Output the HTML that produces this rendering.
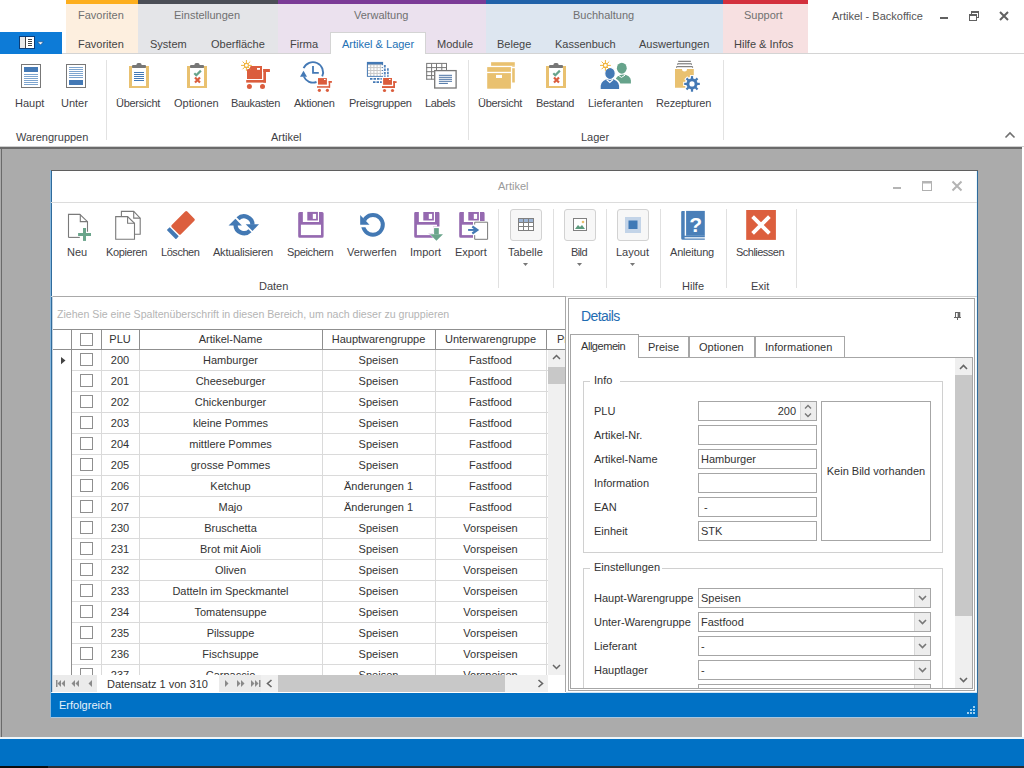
<!DOCTYPE html>
<html><head><meta charset="utf-8">
<style>
*{margin:0;padding:0;box-sizing:border-box}
html,body{width:1024px;height:768px;overflow:hidden;background:#fff;font-family:"Liberation Sans",sans-serif}
.a{position:absolute}
.t{position:absolute;font-size:11px;line-height:11px;white-space:nowrap;color:#3f3f46}
.c{text-align:center}
svg{position:absolute;overflow:visible}
</style></head><body>

<div class="a" style="left:0px;top:32px;width:62px;height:22px;background:#0d7bd7;"></div>
<div class="a" style="left:66px;top:0px;width:72px;height:53px;background:#fdefdf;"></div>
<div class="a" style="left:66px;top:0px;width:72px;height:4px;background:#fdae1d;"></div>
<div class="a" style="left:138px;top:0px;width:140px;height:53px;background:#e4e5e8;"></div>
<div class="a" style="left:138px;top:0px;width:140px;height:4px;background:#4b4e56;"></div>
<div class="a" style="left:278px;top:0px;width:208px;height:53px;background:#ebe1ee;"></div>
<div class="a" style="left:278px;top:0px;width:208px;height:4px;background:#7b3b96;"></div>
<div class="a" style="left:486px;top:0px;width:237px;height:53px;background:#dde6f0;"></div>
<div class="a" style="left:486px;top:0px;width:237px;height:4px;background:#2062a9;"></div>
<div class="a" style="left:723px;top:0px;width:85px;height:53px;background:#f7e0e1;"></div>
<div class="a" style="left:723px;top:0px;width:85px;height:4px;background:#d3303d;"></div>
<div class="a" style="left:62px;top:53px;width:962px;height:1px;background:#d4d4d4;"></div>
<div class="a" style="left:330px;top:32px;width:96px;height:22px;background:#fff;border:1px solid #d4d4d4;border-bottom:none;"></div>
<div class="t" style="left:78px;top:10px;color:#707070;">Favoriten</div>
<div class="t" style="left:174px;top:10px;color:#707070;">Einstellungen</div>
<div class="t" style="left:354px;top:10px;color:#707070;">Verwaltung</div>
<div class="t" style="left:573px;top:10px;color:#707070;">Buchhaltung</div>
<div class="t" style="left:744px;top:10px;color:#707070;">Support</div>
<div class="t" style="left:78px;top:39px;color:#444;">Favoriten</div>
<div class="t" style="left:150px;top:39px;color:#444;">System</div>
<div class="t" style="left:211px;top:39px;color:#444;">Oberfl&auml;che</div>
<div class="t" style="left:290px;top:39px;color:#444;">Firma</div>
<div class="t" style="left:342px;top:39px;color:#2371b4;">Artikel &amp; Lager</div>
<div class="t" style="left:437px;top:39px;color:#444;">Module</div>
<div class="t" style="left:497px;top:39px;color:#444;">Belege</div>
<div class="t" style="left:555px;top:39px;color:#444;">Kassenbuch</div>
<div class="t" style="left:639px;top:39px;color:#444;">Auswertungen</div>
<div class="t" style="left:734px;top:39px;color:#444;">Hilfe &amp; Infos</div>
<div class="t" style="left:832px;top:11px;color:#555;">Artikel - Backoffice</div>
<div class="a" style="left:0px;top:146px;width:1024px;height:1px;background:#cfcfcf;"></div>
<div class="a" style="left:106px;top:60px;width:1px;height:80px;background:#e2e2e2;"></div>
<div class="a" style="left:468px;top:60px;width:1px;height:80px;background:#e2e2e2;"></div>
<div class="a" style="left:723px;top:60px;width:1px;height:80px;background:#e2e2e2;"></div>
<div class="t" style="left:15px;top:98px;color:#3f3f46;">Haupt</div>
<div class="t" style="left:61px;top:98px;color:#3f3f46;">Unter</div>
<div class="t" style="left:116px;top:98px;color:#3f3f46;letter-spacing:-0.27px;">&Uuml;bersicht</div>
<div class="t" style="left:174px;top:98px;color:#3f3f46;">Optionen</div>
<div class="t" style="left:231px;top:98px;color:#3f3f46;letter-spacing:-0.34px;">Baukasten</div>
<div class="t" style="left:294px;top:98px;color:#3f3f46;letter-spacing:-0.29px;">Aktionen</div>
<div class="t" style="left:349px;top:98px;color:#3f3f46;letter-spacing:-0.23px;">Preisgruppen</div>
<div class="t" style="left:425px;top:98px;color:#3f3f46;letter-spacing:-0.4px;">Labels</div>
<div class="t" style="left:478px;top:98px;color:#3f3f46;letter-spacing:-0.27px;">&Uuml;bersicht</div>
<div class="t" style="left:536px;top:98px;color:#3f3f46;letter-spacing:-0.32px;">Bestand</div>
<div class="t" style="left:588px;top:98px;color:#3f3f46;">Lieferanten</div>
<div class="t" style="left:656px;top:98px;color:#3f3f46;letter-spacing:-0.18px;">Rezepturen</div>
<div class="t" style="left:16px;top:132px;color:#3f3f46;">Warengruppen</div>
<div class="t" style="left:271px;top:132px;color:#3f3f46;">Artikel</div>
<div class="t" style="left:581px;top:132px;color:#3f3f46;">Lager</div>
<svg style="left:0;top:0" width="1024" height="148"><rect x="19.5" y="36.5" width="15" height="12" fill="#fff" stroke="#0a3d7a" stroke-width="1"/><rect x="20" y="37" width="5" height="11" fill="#e8e8e8"/><rect x="25" y="37" width="1" height="11" fill="#444"/><rect x="28" y="39" width="4" height="1" fill="#444"/><rect x="28" y="41" width="4" height="1" fill="#444"/><rect x="28" y="43" width="4" height="1" fill="#444"/><rect x="28" y="45" width="4" height="1" fill="#444"/><path d="M37.5 41.8h6l-3 3.2z" fill="#fff" stroke="#0a3d7a" stroke-width="0.6"/><rect x="940" y="17" width="8" height="2" fill="#616161"/><g fill="none" stroke="#616161" stroke-width="1"><rect x="971.5" y="11.5" width="7" height="6"/><rect x="969.5" y="14.5" width="7" height="6" fill="#fff"/></g><rect x="971" y="11" width="8" height="2" fill="#616161"/><rect x="969" y="14" width="8" height="2" fill="#616161"/><path d="M1000 12l8 8M1008 12l-8 8" stroke="#616161" stroke-width="2"/><path d="M1005.5 137.5l4.5-4.5 4.5 4.5" fill="none" stroke="#707070" stroke-width="1.6"/><rect x="21.5" y="64.5" width="19" height="23" fill="#fff" stroke="#777"/><rect x="24" y="67" width="14" height="5" fill="#4479b5"/><rect x="24" y="74" width="14" height="1" fill="#7ea5cf"/><rect x="24" y="76" width="14" height="1" fill="#7ea5cf"/><rect x="24" y="78" width="14" height="1" fill="#7ea5cf"/><rect x="24" y="80" width="14" height="1" fill="#7ea5cf"/><rect x="24" y="82" width="14" height="1" fill="#7ea5cf"/><rect x="24" y="84" width="14" height="1" fill="#7ea5cf"/><rect x="66.5" y="64.5" width="19" height="23" fill="#fff" stroke="#777"/><rect x="69" y="80" width="14" height="5" fill="#4479b5"/><rect x="69" y="67" width="14" height="1" fill="#7ea5cf"/><rect x="69" y="69" width="14" height="1" fill="#7ea5cf"/><rect x="69" y="71" width="14" height="1" fill="#7ea5cf"/><rect x="69" y="73" width="14" height="1" fill="#7ea5cf"/><rect x="69" y="75" width="14" height="1" fill="#7ea5cf"/><rect x="69" y="77" width="14" height="1" fill="#7ea5cf"/><g transform="translate(129,63)"><rect x="0" y="3" width="20" height="22" fill="#e9c170"/><rect x="3" y="5" width="14" height="18" fill="#fff"/><rect x="3" y="2" width="14" height="3" rx="1" fill="#777"/><rect x="7.5" y="0" width="5" height="3" rx="1.5" fill="#777"/><rect x="5" y="9" width="10" height="1" fill="#4479b5"/><rect x="5" y="11" width="10" height="1" fill="#4479b5"/><rect x="5" y="13" width="10" height="1" fill="#4479b5"/><rect x="5" y="15" width="10" height="1" fill="#4479b5"/><rect x="5" y="17" width="10" height="1" fill="#4479b5"/></g><g transform="translate(187,63)"><rect x="0" y="3" width="20" height="22" fill="#e9c170"/><rect x="3" y="5" width="14" height="18" fill="#fff"/><rect x="3" y="2" width="14" height="3" rx="1" fill="#777"/><rect x="7.5" y="0" width="5" height="3" rx="1.5" fill="#777"/><path d="M7.3 10.2l2 2 4.6-4.6" fill="none" stroke="#66a38b" stroke-width="2.2"/><path d="M8 14.5l5 5M13 14.5l-5 5" stroke="#db5d3d" stroke-width="2.2"/></g><g transform="translate(546,63)"><rect x="0" y="3" width="20" height="22" fill="#e9c170"/><rect x="3" y="5" width="14" height="18" fill="#fff"/><rect x="3" y="2" width="14" height="3" rx="1" fill="#777"/><rect x="7.5" y="0" width="5" height="3" rx="1.5" fill="#777"/><path d="M7.3 10.2l2 2 4.6-4.6" fill="none" stroke="#66a38b" stroke-width="2.2"/><path d="M8 14.5l5 5M13 14.5l-5 5" stroke="#db5d3d" stroke-width="2.2"/></g><g transform="translate(236,55)" fill="#db5d3d"><rect x="11" y="11" width="15" height="13"/><rect x="21" y="13" width="3" height="1.8" fill="#fff"/><rect x="27.3" y="14" width="6.6" height="3"/><rect x="27.3" y="14" width="2.7" height="13.6"/><rect x="10.2" y="25" width="19.8" height="2.6"/><circle cx="13.4" cy="31.5" r="2.5"/><circle cx="26.5" cy="31.5" r="2.5"/><circle cx="10.4" cy="10.4" r="4.2" fill="#fff"/><line x1="12.20" y1="10.40" x2="15.80" y2="10.40" stroke="#f0b43c" stroke-width="1"/><line x1="11.67" y1="11.67" x2="14.22" y2="14.22" stroke="#f0b43c" stroke-width="1"/><line x1="10.40" y1="12.20" x2="10.40" y2="15.80" stroke="#f0b43c" stroke-width="1"/><line x1="9.13" y1="11.67" x2="6.58" y2="14.22" stroke="#f0b43c" stroke-width="1"/><line x1="8.60" y1="10.40" x2="5.00" y2="10.40" stroke="#f0b43c" stroke-width="1"/><line x1="9.13" y1="9.13" x2="6.58" y2="6.58" stroke="#f0b43c" stroke-width="1"/><line x1="10.40" y1="8.60" x2="10.40" y2="5.00" stroke="#f0b43c" stroke-width="1"/><line x1="11.67" y1="9.13" x2="14.22" y2="6.58" stroke="#f0b43c" stroke-width="1"/><circle cx="10.4" cy="10.4" r="2" fill="#fff" stroke="#f0b43c" stroke-width="1.1"/></g><g transform="translate(298,57)"><path d="M5.6 11.2 A10 10 0 1 1 24.2 19.4" fill="none" stroke="#4479b5" stroke-width="1.9"/><path d="M18.5 25 A10 10 0 0 1 5.8 19.5" fill="none" stroke="#4479b5" stroke-width="1.9"/><path d="M5.5 13.8L2 19.8h7z" fill="#4479b5"/><path d="M15 9.1v6.8h5.8" fill="none" stroke="#4479b5" stroke-width="1.8"/><g fill="#db5d3d"><rect x="20" y="21.1" width="8.9" height="6.5"/><rect x="26" y="22" width="1.6" height="1" fill="#fff"/><rect x="30.7" y="24" width="3.2" height="1.8"/><rect x="30.7" y="24" width="1.5" height="6.7"/><rect x="19" y="29.2" width="13" height="1.5"/><circle cx="21.4" cy="33.3" r="1.6"/><circle cx="29.4" cy="33.3" r="1.6"/></g></g><g transform="translate(362,58)"><rect x="5.4" y="4.4" width="15.2" height="13.9" fill="#c8c8c8" stroke="#4479b5" stroke-width="1"/><rect x="5" y="4" width="16" height="2.4" fill="#4479b5"/><rect x="6.0" y="7.2" width="2.2" height="1.9" fill="#fff"/><rect x="6.0" y="10.1" width="2.2" height="1.9" fill="#fff"/><rect x="6.0" y="13.0" width="2.2" height="1.9" fill="#fff"/><rect x="6.0" y="15.9" width="2.2" height="1.9" fill="#fff"/><rect x="9.2" y="7.2" width="2.2" height="1.9" fill="#fff"/><rect x="9.2" y="10.1" width="2.2" height="1.9" fill="#fff"/><rect x="9.2" y="13.0" width="2.2" height="1.9" fill="#fff"/><rect x="9.2" y="15.9" width="2.2" height="1.9" fill="#fff"/><rect x="12.4" y="7.2" width="2.2" height="1.9" fill="#fff"/><rect x="12.4" y="10.1" width="2.2" height="1.9" fill="#fff"/><rect x="12.4" y="13.0" width="2.2" height="1.9" fill="#fff"/><rect x="12.4" y="15.9" width="2.2" height="1.9" fill="#fff"/><rect x="15.6" y="7.2" width="2.2" height="1.9" fill="#fff"/><rect x="15.6" y="10.1" width="2.2" height="1.9" fill="#fff"/><rect x="15.6" y="13.0" width="2.2" height="1.9" fill="#fff"/><rect x="15.6" y="15.9" width="2.2" height="1.9" fill="#fff"/><rect x="18.8" y="7.2" width="2.2" height="1.9" fill="#fff"/><rect x="18.8" y="10.1" width="2.2" height="1.9" fill="#fff"/><rect x="18.8" y="13.0" width="2.2" height="1.9" fill="#fff"/><rect x="18.8" y="15.9" width="2.2" height="1.9" fill="#fff"/><path d="M22.9 7v11.8M25.9 10.2v8.6" stroke="#4479b5" stroke-width="1.6" stroke-dasharray="2.5 1"/><path d="M8 20.9h11.8M11 24.1h8.8" stroke="#4479b5" stroke-width="1.6" stroke-dasharray="2.5 1"/><g fill="#db5d3d"><rect x="21.1" y="20" width="8.9" height="6.8"/><rect x="27" y="21" width="1.6" height="1" fill="#fff"/><rect x="31.2" y="23.2" width="3.4" height="1.8"/><rect x="31.2" y="23.2" width="1.8" height="6.5"/><rect x="20" y="28.1" width="13" height="1.9"/><circle cx="22.5" cy="32.5" r="1.6"/><circle cx="30.5" cy="32.5" r="1.6"/></g></g><g transform="translate(422,58)"><clipPath id="lbclip"><path d="M0 0h40v12.1h-28v28h-12z"/></clipPath><g clip-path="url(#lbclip)"><path d="M4.7 5.5v16" stroke="#777" stroke-width="1"/><path d="M9.6 5.5v16" stroke="#777" stroke-width="1"/><path d="M14.5 5.5v16" stroke="#777" stroke-width="1"/><path d="M19.8 5.5v16" stroke="#777" stroke-width="1"/><path d="M24.5 5.5v16" stroke="#777" stroke-width="1"/><path d="M4.2 5.4h20.8" stroke="#777" stroke-width="1"/><path d="M4.2 9.6h20.8" stroke="#777" stroke-width="1"/><path d="M4.2 13.7h20.8" stroke="#777" stroke-width="1"/><path d="M4.2 17.6h20.8" stroke="#777" stroke-width="1"/><path d="M4.2 21.2h20.8" stroke="#777" stroke-width="1"/></g><rect x="12.7" y="12.6" width="21.4" height="17.4" fill="#fff" stroke="#777" stroke-width="1.3"/><rect x="16.9" y="16.8" width="13.1" height="1" fill="#4a72a4"/><rect x="16.9" y="18.8" width="13.1" height="1" fill="#4a72a4"/><rect x="16.9" y="20.8" width="13.1" height="1" fill="#4a72a4"/><rect x="16.9" y="22.8" width="13.1" height="1" fill="#4a72a4"/><rect x="16.9" y="24.9" width="9" height="1" fill="#4a72a4"/></g><g transform="translate(483,58)" fill="#e9c170"><rect x="8.1" y="4.2" width="23.7" height="3.6"/><rect x="29.2" y="7.8" width="2.6" height="0.9"/><rect x="29.2" y="10.2" width="2.6" height="14.3"/><rect x="4.2" y="9.1" width="23.7" height="4.7"/><rect x="4.2" y="15.1" width="23.7" height="15.6"/><rect x="13" y="16.9" width="6" height="3.1" fill="#fff"/></g><g transform="translate(596,56)"><path d="M19.5 27.6 v-3 a7.7 6 0 0 1 15.4 0 v3z" fill="#66a38b"/><path d="M22 19.2 l3.5 2.2 3.5-2.2" fill="none" stroke="#fff" stroke-width="1"/><ellipse cx="25.8" cy="12.2" rx="4.9" ry="5.5" fill="#66a38b"/><path d="M3.9 33.8 v-4 a9 7 0 0 1 20 0 v4z" fill="#4479b5" stroke="#fff" stroke-width="1.6"/><ellipse cx="14" cy="17.4" rx="5.3" ry="6.1" fill="#4479b5" stroke="#fff" stroke-width="1.2"/><path d="M10.5 23.5l3.3 3 3.3-3" fill="none" stroke="#fff" stroke-width="1.2"/><circle cx="9.4" cy="9.4" r="4.2" fill="#fff"/><line x1="11.20" y1="9.40" x2="14.80" y2="9.40" stroke="#f0b43c" stroke-width="1"/><line x1="10.67" y1="10.67" x2="13.22" y2="13.22" stroke="#f0b43c" stroke-width="1"/><line x1="9.40" y1="11.20" x2="9.40" y2="14.80" stroke="#f0b43c" stroke-width="1"/><line x1="8.13" y1="10.67" x2="5.58" y2="13.22" stroke="#f0b43c" stroke-width="1"/><line x1="7.60" y1="9.40" x2="4.00" y2="9.40" stroke="#f0b43c" stroke-width="1"/><line x1="8.13" y1="8.13" x2="5.58" y2="5.58" stroke="#f0b43c" stroke-width="1"/><line x1="9.40" y1="7.60" x2="9.40" y2="4.00" stroke="#f0b43c" stroke-width="1"/><line x1="10.67" y1="8.13" x2="13.22" y2="5.58" stroke="#f0b43c" stroke-width="1"/><circle cx="9.4" cy="9.4" r="2" fill="#fff" stroke="#f0b43c" stroke-width="1.1"/></g><g transform="translate(668,56)"><path d="M10.2 5.3h12.7" stroke="#666" stroke-width="1"/><path d="M9.6 8.6v-0.8h13.9v0.8" fill="none" stroke="#666" stroke-width="1"/><path d="M8.6 11.7v-1h16v1" fill="none" stroke="#666" stroke-width="1"/><path d="M7 13h7a2.5 2.5 0 0 0 5 0h6.8v18.8h-18.8z" fill="#e9c170"/><g transform="translate(24,27.9)"><circle r="7.2" fill="#fff"/><rect x="-2.1" y="-8.8" width="4.2" height="5" fill="#fff" transform="rotate(0)"/><rect x="-2.1" y="-8.8" width="4.2" height="5" fill="#fff" transform="rotate(45)"/><rect x="-2.1" y="-8.8" width="4.2" height="5" fill="#fff" transform="rotate(90)"/><rect x="-2.1" y="-8.8" width="4.2" height="5" fill="#fff" transform="rotate(135)"/><rect x="-2.1" y="-8.8" width="4.2" height="5" fill="#fff" transform="rotate(180)"/><rect x="-2.1" y="-8.8" width="4.2" height="5" fill="#fff" transform="rotate(225)"/><rect x="-2.1" y="-8.8" width="4.2" height="5" fill="#fff" transform="rotate(270)"/><rect x="-2.1" y="-8.8" width="4.2" height="5" fill="#fff" transform="rotate(315)"/><circle r="5.6" fill="#4479b5"/><rect x="-1.1" y="-7.8" width="2.2" height="4" fill="#4479b5" transform="rotate(0)"/><rect x="-1.1" y="-7.8" width="2.2" height="4" fill="#4479b5" transform="rotate(45)"/><rect x="-1.1" y="-7.8" width="2.2" height="4" fill="#4479b5" transform="rotate(90)"/><rect x="-1.1" y="-7.8" width="2.2" height="4" fill="#4479b5" transform="rotate(135)"/><rect x="-1.1" y="-7.8" width="2.2" height="4" fill="#4479b5" transform="rotate(180)"/><rect x="-1.1" y="-7.8" width="2.2" height="4" fill="#4479b5" transform="rotate(225)"/><rect x="-1.1" y="-7.8" width="2.2" height="4" fill="#4479b5" transform="rotate(270)"/><rect x="-1.1" y="-7.8" width="2.2" height="4" fill="#4479b5" transform="rotate(315)"/><circle r="2.6" fill="#fff"/></g></g></svg>
<div class="a" style="left:0px;top:147px;width:1024px;height:2px;background:#6a6a6a;"></div>
<div class="a" style="left:0px;top:149px;width:1024px;height:588px;background:#ababab;"></div>
<div class="a" style="left:1px;top:149px;width:1px;height:588px;background:#6a6a6a;"></div>
<div class="a" style="left:1022px;top:147px;width:2px;height:591px;background:#fff;"></div>
<div class="a" style="left:0px;top:737px;width:1024px;height:2px;background:#eef6fb;"></div>
<div class="a" style="left:0px;top:739px;width:1024px;height:27px;background:#0071c5;"></div>
<div class="a" style="left:0px;top:766px;width:1024px;height:2px;background:#2a2d33;"></div>
<div class="a" style="left:0px;top:766px;width:48px;height:2px;background:#0c0c0c;"></div>
<div class="a" style="left:50px;top:170px;width:928px;height:547px;background:#fff;"></div>
<div class="a" style="left:50px;top:170px;width:1px;height:548px;background:#88b6da;"></div>
<div class="a" style="left:51px;top:170px;width:1px;height:547px;background:#2f6b9c;"></div>
<div class="a" style="left:976px;top:171px;width:1px;height:546px;background:#eaf8ff;"></div>
<div class="a" style="left:977px;top:170px;width:1px;height:548px;background:#2f6b9c;"></div>
<div class="a" style="left:51px;top:170px;width:927px;height:1px;background:#5f5f5f;"></div>
<div class="t" style="left:498px;top:181px;color:#9a9a9a;">Artikel</div>
<svg style="left:0;top:0" width="1024" height="210"><rect x="893" y="187" width="8" height="2" fill="#b4b4b4"/><g fill="none" stroke="#b0b0b0" stroke-width="1"><rect x="922.5" y="181.5" width="9" height="9"/></g><rect x="922" y="181" width="10" height="2.5" fill="#b4b4b4"/><path d="M952.5 181.5l9 9M961.5 181.5l-9 9" stroke="#b4b4b4" stroke-width="2"/></svg>
<div class="a" style="left:51px;top:202px;width:926px;height:1px;background:#dcdcdc;"></div>
<div class="a" style="left:51px;top:296px;width:926px;height:1px;background:#d0d0d0;"></div>
<div class="a" style="left:498px;top:209px;width:1px;height:79px;background:#e0e0e0;"></div>
<div class="a" style="left:553px;top:209px;width:1px;height:79px;background:#e0e0e0;"></div>
<div class="a" style="left:606px;top:209px;width:1px;height:79px;background:#e0e0e0;"></div>
<div class="a" style="left:660px;top:209px;width:1px;height:79px;background:#e0e0e0;"></div>
<div class="a" style="left:726px;top:209px;width:1px;height:79px;background:#e0e0e0;"></div>
<div class="a" style="left:796px;top:209px;width:1px;height:79px;background:#e0e0e0;"></div>
<div class="t" style="left:67px;top:247px;color:#3f3f46;">Neu</div>
<div class="t" style="left:106px;top:247px;color:#3f3f46;letter-spacing:-0.37px;">Kopieren</div>
<div class="t" style="left:161px;top:247px;color:#3f3f46;letter-spacing:-0.45px;">L&ouml;schen</div>
<div class="t" style="left:213px;top:247px;color:#3f3f46;letter-spacing:-0.23px;">Aktualisieren</div>
<div class="t" style="left:287px;top:247px;color:#3f3f46;letter-spacing:-0.35px;">Speichern</div>
<div class="t" style="left:347px;top:247px;color:#3f3f46;">Verwerfen</div>
<div class="t" style="left:410px;top:247px;color:#3f3f46;">Import</div>
<div class="t" style="left:455px;top:247px;color:#3f3f46;">Export</div>
<div class="t" style="left:508px;top:247px;color:#3f3f46;">Tabelle</div>
<div class="t" style="left:571px;top:247px;color:#3f3f46;letter-spacing:-0.6px;">Bild</div>
<div class="t" style="left:616px;top:247px;color:#3f3f46;">Layout</div>
<div class="t" style="left:670px;top:247px;color:#3f3f46;letter-spacing:-0.21px;">Anleitung</div>
<div class="t" style="left:736px;top:247px;color:#3f3f46;letter-spacing:-0.52px;">Schliessen</div>
<div class="t" style="left:259px;top:281px;color:#3f3f46;">Daten</div>
<div class="t" style="left:682px;top:281px;color:#3f3f46;">Hilfe</div>
<div class="t" style="left:751px;top:281px;color:#3f3f46;">Exit</div>
<svg style="left:523.0px;top:263px" width="5" height="3"><path d="M0 0h5l-2.5 3z" fill="#777"/></svg>
<svg style="left:577.0px;top:263px" width="5" height="3"><path d="M0 0h5l-2.5 3z" fill="#777"/></svg>
<svg style="left:630.0px;top:263px" width="5" height="3"><path d="M0 0h5l-2.5 3z" fill="#777"/></svg>
<div class="a" style="left:510px;top:209px;width:32px;height:32px;background:#f7f7f7;border:1px solid #d2d2d2;border-radius:3px;"></div>
<div class="a" style="left:564px;top:209px;width:32px;height:32px;background:#f7f7f7;border:1px solid #d2d2d2;border-radius:3px;"></div>
<div class="a" style="left:617px;top:209px;width:32px;height:32px;background:#f7f7f7;border:1px solid #d2d2d2;border-radius:3px;"></div>
<svg style="left:518px;top:218px" width="16" height="13"><rect x="0.5" y="0.5" width="15" height="12" fill="#fff" stroke="#808080"/><rect x="1" y="1" width="14" height="3.5" fill="#9cb4d4"/><path d="M0.5 4.5h15M0.5 8.5h15M5.5 0.5v12M10.5 0.5v12" stroke="#808080" stroke-width="1"/></svg>
<svg style="left:573px;top:218px" width="14" height="13"><rect x="0.5" y="0.5" width="13" height="12" fill="#fff" stroke="#808080"/><path d="M2 11l3-4 2 2 2-2 3 4z" fill="#5b9a7d"/><circle cx="10" cy="4" r="1.3" fill="#e8c06e"/></svg>
<svg style="left:625px;top:217px" width="16" height="16"><rect x="0" y="0" width="16" height="16" fill="#c3d4e8"/><rect x="3.5" y="3.5" width="9" height="8.5" fill="#3f79b6"/></svg>
<svg style="left:0;top:0" width="1024" height="300"><path d="M68.5 237.4V214.4h11.3l7.7 7.3v10" fill="#fff" stroke="#7a7a7a" stroke-width="1.1"/><path d="M68.5 237.4h11.3" stroke="#7a7a7a" stroke-width="1.1"/><path d="M80.3 214.4v7.2h7.2" fill="none" stroke="#7a7a7a" stroke-width="1.1"/><rect x="78.1" y="233" width="12.9" height="3" fill="#6aa58b"/><rect x="83" y="228" width="3" height="12.9" fill="#6aa58b"/><path d="M121.4 216.6V211.4h12.3l6.5 6.7v16.1h-5.7" fill="#fff" stroke="#7a7a7a" stroke-width="1.1"/><path d="M133.7 211.4v6.7h6.5" fill="none" stroke="#7a7a7a" stroke-width="1.1"/><path d="M115.7 239.2V216.6h11.9l6.9 6.7v15.9z" fill="#fff" stroke="#7a7a7a" stroke-width="1.1"/><path d="M127.6 216.6v6.7h6.9" fill="none" stroke="#7a7a7a" stroke-width="1.1"/><g transform="translate(183.05,222.9) rotate(-45)"><rect x="-11" y="-6.5" width="22" height="13" rx="1.5" fill="#dc5f3e"/><rect x="-16.6" y="-6.5" width="4.2" height="13" rx="0.8" fill="#4379b4"/></g><g transform="translate(226,205)"><path d="M12.03 13.73A8.45 8.45 0 0 1 26.45 19.7" fill="none" stroke="#4379b4" stroke-width="4.3"/><path d="M9.55 19.7A8.45 8.45 0 0 0 23.97 25.67" fill="none" stroke="#4379b4" stroke-width="4.3"/><path d="M19.7 19.2H33l-6.5 6.8z" fill="#4379b4"/><path d="M2.6 20.6h13.3L9.4 13.8z" fill="#4379b4"/></g><g transform="translate(294,211.9)"><g><path d="M5.7 0h22.4a1.5 1.5 0 0 1 1.5 1.5v22.9a1.5 1.5 0 0 1 -1.5 1.5h-22.4a1.5 1.5 0 0 1 -1.5 -1.5v-22.9a1.5 1.5 0 0 1 1.5-1.5z" fill="#9569b0"/><rect x="8.85" y="0" width="16.15" height="10.1" fill="#fff"/><rect x="13.3" y="0" width="10.6" height="8.6" fill="#9569b0"/><rect x="18.8" y="2" width="3.3" height="5" fill="#fff"/><rect x="6.9" y="12.8" width="20.1" height="10.4" fill="#fff"/></g></g><clipPath id="impclip"><path d="M0 0H29.8V14.6H23.1V21.3H18.5L23.2 26V31H0Z"/></clipPath><g transform="translate(410,211.9)"><g clip-path="url(#impclip)"><path d="M5.7 0h22.4a1.5 1.5 0 0 1 1.5 1.5v22.9a1.5 1.5 0 0 1 -1.5 1.5h-22.4a1.5 1.5 0 0 1 -1.5 -1.5v-22.9a1.5 1.5 0 0 1 1.5-1.5z" fill="#9569b0"/><rect x="8.85" y="0" width="16.15" height="10.1" fill="#fff"/><rect x="13.3" y="0" width="10.6" height="8.6" fill="#9569b0"/><rect x="18.8" y="2" width="3.3" height="5" fill="#fff"/><rect x="6.9" y="12.8" width="20.1" height="10.4" fill="#fff"/></g><rect x="24.1" y="16.2" width="4.7" height="6.3" fill="#6aa58b"/><path d="M19.9 22.3h13.1l-6.55 6.55z" fill="#6aa58b"/></g><clipPath id="expclip"><path d="M0 0h40v9.0h-22v22h-18z"/></clipPath><g transform="translate(455,211.9)"><g clip-path="url(#expclip)"><path d="M5.7 0h22.4a1.5 1.5 0 0 1 1.5 1.5v22.9a1.5 1.5 0 0 1 -1.5 1.5h-22.4a1.5 1.5 0 0 1 -1.5 -1.5v-22.9a1.5 1.5 0 0 1 1.5-1.5z" fill="#9569b0"/><rect x="8.85" y="0" width="16.15" height="10.1" fill="#fff"/><rect x="13.3" y="0" width="10.6" height="8.6" fill="#9569b0"/><rect x="18.8" y="2" width="3.3" height="5" fill="#fff"/><rect x="6.9" y="12.8" width="20.1" height="10.4" fill="#fff"/></g><path d="M19.7 12.7V10.3h12.9v17.1H19.7v-4.2" fill="none" stroke="#7a7a7a" stroke-width="1"/><rect x="13.1" y="17.1" width="8.6" height="1.9" fill="#4379b4"/><path d="M17.3 14.6l5 3.5-5 3.5" fill="none" stroke="#4379b4" stroke-width="2.2"/></g><clipPath id="vwclip"><path d="M-5 -5H40V40H-5V21.3H16.4L-2.5 1.28H-5Z"/></clipPath><g transform="translate(355,206)"><circle cx="17.95" cy="18.85" r="9.85" fill="none" stroke="#4379b4" stroke-width="4" clip-path="url(#vwclip)"/><path d="M5.2 8.9V18.75H14.5z" fill="#4379b4"/></g><g transform="translate(676,206)" fill="#4a7fb8"><path d="M6.2 4.9h2.5v24.9h20.1v1.4H8.7a1.2 1.2 0 0 0 0 1.2h20.1v1.4H6.7a1.5 1.5 0 0 1-1.5-1.5V5.9a1 1 0 0 1 1-1z"/><rect x="10.1" y="4.9" width="18.7" height="24.9"/><text x="19.6" y="25.8" font-family="Liberation Sans" font-weight="bold" font-size="21" fill="#fff" text-anchor="middle">?</text></g><rect x="746.2" y="210" width="29.7" height="29.9" fill="#dc5f3e"/><path d="M752.6 216.6L769.4 233.4M769.4 216.6L752.6 233.4" stroke="#fff" stroke-width="3.8"/></svg>
<div class="a" style="left:51px;top:692px;width:926px;height:1px;background:#cfe4f5;"></div>
<div class="a" style="left:51px;top:693px;width:926px;height:24px;background:#0071c5;"></div>
<div class="a" style="left:51px;top:717px;width:927px;height:1px;background:#a9c6de;"></div>
<div class="t" style="left:59px;top:700px;color:#e6f2fb;">Erfolgreich</div>
<svg style="left:966px;top:705px" width="10" height="10"><rect x="7" y="1" width="2" height="2" fill="#9fd0f0"/><rect x="4" y="4" width="2" height="2" fill="#9fd0f0"/><rect x="7" y="4" width="2" height="2" fill="#9fd0f0"/><rect x="1" y="7" width="2" height="2" fill="#9fd0f0"/><rect x="4" y="7" width="2" height="2" fill="#9fd0f0"/><rect x="7" y="7" width="2" height="2" fill="#9fd0f0"/></svg>
<div class="a" style="left:52px;top:296px;width:514px;height:397px;background:#fff;"></div>
<div class="a" style="left:52px;top:296px;width:514px;height:1px;background:#a9a9a9;"></div>
<div class="a" style="left:565px;top:296px;width:1px;height:396px;background:#a9a9a9;"></div>
<div class="a" style="left:52px;top:296px;width:1px;height:396px;background:#c5d3e0;"></div>
<div class="t" style="left:57px;top:309px;color:#b4b4b4;font-size:10.6px;">Ziehen Sie eine Spalten&uuml;berschrift in diesen Bereich, um nach dieser zu gruppieren</div>
<div class="a" style="left:53px;top:329px;width:512px;height:1px;background:#8f8f8f;"></div>
<div class="a" style="left:53px;top:349px;width:512px;height:1px;background:#8f8f8f;"></div>
<div class="a" style="left:71px;top:329px;width:1px;height:20px;background:#8f8f8f;"></div>
<div class="a" style="left:101px;top:329px;width:1px;height:20px;background:#8f8f8f;"></div>
<div class="a" style="left:139px;top:329px;width:1px;height:20px;background:#8f8f8f;"></div>
<div class="a" style="left:322px;top:329px;width:1px;height:20px;background:#8f8f8f;"></div>
<div class="a" style="left:435px;top:329px;width:1px;height:20px;background:#8f8f8f;"></div>
<div class="a" style="left:546px;top:329px;width:1px;height:20px;background:#8f8f8f;"></div>
<div class="a" style="left:71px;top:349px;width:1px;height:326px;background:#8f8f8f;"></div>
<div class="t" style="left:-30.0px;top:334px;width:300px;text-align:center;color:#333;">PLU</div>
<div class="t" style="left:80.5px;top:334px;width:300px;text-align:center;color:#333;">Artikel-Name</div>
<div class="t" style="left:228.5px;top:334px;width:300px;text-align:center;color:#333;">Hauptwarengruppe</div>
<div class="t" style="left:340.5px;top:334px;width:300px;text-align:center;color:#333;">Unterwarengruppe</div>
<div class="a" style="left:547px;top:330px;width:18px;height:19px;overflow:hidden"><div class="t" style="left:10px;top:4px;color:#333">Pr</div></div>
<div class="a" style="left:80px;top:333px;width:13px;height:13px;border:1px solid #8f8f8f;"></div>
<div class="a" style="left:53px;top:350px;width:495px;height:325px;overflow:hidden">
<div class="a" style="left:19px;top:20px;width:476px;height:1px;background:#dadada"></div>
<div class="a" style="left:27px;top:3px;width:13px;height:13px;border:1px solid #8f8f8f"></div>
<div class="t" style="left:-83.0px;top:5px;width:300px;text-align:center;color:#333">200</div>
<div class="t" style="left:27.5px;top:5px;width:300px;text-align:center;color:#333">Hamburger</div>
<div class="t" style="left:175.5px;top:5px;width:300px;text-align:center;color:#333">Speisen</div>
<div class="t" style="left:287.5px;top:5px;width:300px;text-align:center;color:#333">Fastfood</div>
<div class="a" style="left:19px;top:41px;width:476px;height:1px;background:#dadada"></div>
<div class="a" style="left:27px;top:24px;width:13px;height:13px;border:1px solid #8f8f8f"></div>
<div class="t" style="left:-83.0px;top:26px;width:300px;text-align:center;color:#333">201</div>
<div class="t" style="left:27.5px;top:26px;width:300px;text-align:center;color:#333">Cheeseburger</div>
<div class="t" style="left:175.5px;top:26px;width:300px;text-align:center;color:#333">Speisen</div>
<div class="t" style="left:287.5px;top:26px;width:300px;text-align:center;color:#333">Fastfood</div>
<div class="a" style="left:19px;top:62px;width:476px;height:1px;background:#dadada"></div>
<div class="a" style="left:27px;top:45px;width:13px;height:13px;border:1px solid #8f8f8f"></div>
<div class="t" style="left:-83.0px;top:47px;width:300px;text-align:center;color:#333">202</div>
<div class="t" style="left:27.5px;top:47px;width:300px;text-align:center;color:#333">Chickenburger</div>
<div class="t" style="left:175.5px;top:47px;width:300px;text-align:center;color:#333">Speisen</div>
<div class="t" style="left:287.5px;top:47px;width:300px;text-align:center;color:#333">Fastfood</div>
<div class="a" style="left:19px;top:83px;width:476px;height:1px;background:#dadada"></div>
<div class="a" style="left:27px;top:66px;width:13px;height:13px;border:1px solid #8f8f8f"></div>
<div class="t" style="left:-83.0px;top:68px;width:300px;text-align:center;color:#333">203</div>
<div class="t" style="left:27.5px;top:68px;width:300px;text-align:center;color:#333">kleine Pommes</div>
<div class="t" style="left:175.5px;top:68px;width:300px;text-align:center;color:#333">Speisen</div>
<div class="t" style="left:287.5px;top:68px;width:300px;text-align:center;color:#333">Fastfood</div>
<div class="a" style="left:19px;top:104px;width:476px;height:1px;background:#dadada"></div>
<div class="a" style="left:27px;top:87px;width:13px;height:13px;border:1px solid #8f8f8f"></div>
<div class="t" style="left:-83.0px;top:89px;width:300px;text-align:center;color:#333">204</div>
<div class="t" style="left:27.5px;top:89px;width:300px;text-align:center;color:#333">mittlere Pommes</div>
<div class="t" style="left:175.5px;top:89px;width:300px;text-align:center;color:#333">Speisen</div>
<div class="t" style="left:287.5px;top:89px;width:300px;text-align:center;color:#333">Fastfood</div>
<div class="a" style="left:19px;top:125px;width:476px;height:1px;background:#dadada"></div>
<div class="a" style="left:27px;top:108px;width:13px;height:13px;border:1px solid #8f8f8f"></div>
<div class="t" style="left:-83.0px;top:110px;width:300px;text-align:center;color:#333">205</div>
<div class="t" style="left:27.5px;top:110px;width:300px;text-align:center;color:#333">grosse Pommes</div>
<div class="t" style="left:175.5px;top:110px;width:300px;text-align:center;color:#333">Speisen</div>
<div class="t" style="left:287.5px;top:110px;width:300px;text-align:center;color:#333">Fastfood</div>
<div class="a" style="left:19px;top:146px;width:476px;height:1px;background:#dadada"></div>
<div class="a" style="left:27px;top:129px;width:13px;height:13px;border:1px solid #8f8f8f"></div>
<div class="t" style="left:-83.0px;top:131px;width:300px;text-align:center;color:#333">206</div>
<div class="t" style="left:27.5px;top:131px;width:300px;text-align:center;color:#333">Ketchup</div>
<div class="t" style="left:175.5px;top:131px;width:300px;text-align:center;color:#333">&Auml;nderungen 1</div>
<div class="t" style="left:287.5px;top:131px;width:300px;text-align:center;color:#333">Fastfood</div>
<div class="a" style="left:19px;top:167px;width:476px;height:1px;background:#dadada"></div>
<div class="a" style="left:27px;top:150px;width:13px;height:13px;border:1px solid #8f8f8f"></div>
<div class="t" style="left:-83.0px;top:152px;width:300px;text-align:center;color:#333">207</div>
<div class="t" style="left:27.5px;top:152px;width:300px;text-align:center;color:#333">Majo</div>
<div class="t" style="left:175.5px;top:152px;width:300px;text-align:center;color:#333">&Auml;nderungen 1</div>
<div class="t" style="left:287.5px;top:152px;width:300px;text-align:center;color:#333">Fastfood</div>
<div class="a" style="left:19px;top:188px;width:476px;height:1px;background:#dadada"></div>
<div class="a" style="left:27px;top:171px;width:13px;height:13px;border:1px solid #8f8f8f"></div>
<div class="t" style="left:-83.0px;top:173px;width:300px;text-align:center;color:#333">230</div>
<div class="t" style="left:27.5px;top:173px;width:300px;text-align:center;color:#333">Bruschetta</div>
<div class="t" style="left:175.5px;top:173px;width:300px;text-align:center;color:#333">Speisen</div>
<div class="t" style="left:287.5px;top:173px;width:300px;text-align:center;color:#333">Vorspeisen</div>
<div class="a" style="left:19px;top:209px;width:476px;height:1px;background:#dadada"></div>
<div class="a" style="left:27px;top:192px;width:13px;height:13px;border:1px solid #8f8f8f"></div>
<div class="t" style="left:-83.0px;top:194px;width:300px;text-align:center;color:#333">231</div>
<div class="t" style="left:27.5px;top:194px;width:300px;text-align:center;color:#333">Brot mit Aioli</div>
<div class="t" style="left:175.5px;top:194px;width:300px;text-align:center;color:#333">Speisen</div>
<div class="t" style="left:287.5px;top:194px;width:300px;text-align:center;color:#333">Vorspeisen</div>
<div class="a" style="left:19px;top:230px;width:476px;height:1px;background:#dadada"></div>
<div class="a" style="left:27px;top:213px;width:13px;height:13px;border:1px solid #8f8f8f"></div>
<div class="t" style="left:-83.0px;top:215px;width:300px;text-align:center;color:#333">232</div>
<div class="t" style="left:27.5px;top:215px;width:300px;text-align:center;color:#333">Oliven</div>
<div class="t" style="left:175.5px;top:215px;width:300px;text-align:center;color:#333">Speisen</div>
<div class="t" style="left:287.5px;top:215px;width:300px;text-align:center;color:#333">Vorspeisen</div>
<div class="a" style="left:19px;top:251px;width:476px;height:1px;background:#dadada"></div>
<div class="a" style="left:27px;top:234px;width:13px;height:13px;border:1px solid #8f8f8f"></div>
<div class="t" style="left:-83.0px;top:236px;width:300px;text-align:center;color:#333">233</div>
<div class="t" style="left:27.5px;top:236px;width:300px;text-align:center;color:#333">Datteln im Speckmantel</div>
<div class="t" style="left:175.5px;top:236px;width:300px;text-align:center;color:#333">Speisen</div>
<div class="t" style="left:287.5px;top:236px;width:300px;text-align:center;color:#333">Vorspeisen</div>
<div class="a" style="left:19px;top:272px;width:476px;height:1px;background:#dadada"></div>
<div class="a" style="left:27px;top:255px;width:13px;height:13px;border:1px solid #8f8f8f"></div>
<div class="t" style="left:-83.0px;top:257px;width:300px;text-align:center;color:#333">234</div>
<div class="t" style="left:27.5px;top:257px;width:300px;text-align:center;color:#333">Tomatensuppe</div>
<div class="t" style="left:175.5px;top:257px;width:300px;text-align:center;color:#333">Speisen</div>
<div class="t" style="left:287.5px;top:257px;width:300px;text-align:center;color:#333">Vorspeisen</div>
<div class="a" style="left:19px;top:293px;width:476px;height:1px;background:#dadada"></div>
<div class="a" style="left:27px;top:276px;width:13px;height:13px;border:1px solid #8f8f8f"></div>
<div class="t" style="left:-83.0px;top:278px;width:300px;text-align:center;color:#333">235</div>
<div class="t" style="left:27.5px;top:278px;width:300px;text-align:center;color:#333">Pilssuppe</div>
<div class="t" style="left:175.5px;top:278px;width:300px;text-align:center;color:#333">Speisen</div>
<div class="t" style="left:287.5px;top:278px;width:300px;text-align:center;color:#333">Vorspeisen</div>
<div class="a" style="left:19px;top:314px;width:476px;height:1px;background:#dadada"></div>
<div class="a" style="left:27px;top:297px;width:13px;height:13px;border:1px solid #8f8f8f"></div>
<div class="t" style="left:-83.0px;top:299px;width:300px;text-align:center;color:#333">236</div>
<div class="t" style="left:27.5px;top:299px;width:300px;text-align:center;color:#333">Fischsuppe</div>
<div class="t" style="left:175.5px;top:299px;width:300px;text-align:center;color:#333">Speisen</div>
<div class="t" style="left:287.5px;top:299px;width:300px;text-align:center;color:#333">Vorspeisen</div>
<div class="a" style="left:19px;top:335px;width:476px;height:1px;background:#dadada"></div>
<div class="a" style="left:27px;top:318px;width:13px;height:13px;border:1px solid #8f8f8f"></div>
<div class="t" style="left:-83.0px;top:320px;width:300px;text-align:center;color:#333">237</div>
<div class="t" style="left:27.5px;top:320px;width:300px;text-align:center;color:#333">Carpaccio</div>
<div class="t" style="left:175.5px;top:320px;width:300px;text-align:center;color:#333">Speisen</div>
<div class="t" style="left:287.5px;top:320px;width:300px;text-align:center;color:#333">Vorspeisen</div>
<div class="a" style="left:48px;top:0;width:1px;height:325px;background:#dadada"></div>
<div class="a" style="left:86px;top:0;width:1px;height:325px;background:#dadada"></div>
<div class="a" style="left:269px;top:0;width:1px;height:325px;background:#dadada"></div>
<div class="a" style="left:382px;top:0;width:1px;height:325px;background:#dadada"></div>
<div class="a" style="left:493px;top:0;width:1px;height:325px;background:#dadada"></div>
</div>
<svg style="left:61px;top:357px" width="5" height="8"><path d="M0 0l4.5 3.6L0 7.2z" fill="#444"/></svg>
<div class="a" style="left:548px;top:350px;width:17px;height:325px;background:#f0f0f0;"></div>
<div class="a" style="left:548px;top:367px;width:17px;height:17px;background:#c8c8c8;"></div>
<svg style="left:552px;top:354px" width="9" height="6"><path d="M1 5l3.5-3.5L8 5" fill="none" stroke="#666" stroke-width="1.5"/></svg>
<svg style="left:552px;top:664px" width="9" height="6"><path d="M1 1l3.5 3.5L8 1" fill="none" stroke="#666" stroke-width="1.5"/></svg>
<div class="a" style="left:53px;top:675px;width:512px;height:17px;background:#fff;"></div>
<div class="a" style="left:53px;top:675px;width:44px;height:17px;background:#ebebeb;"></div>
<div class="a" style="left:219px;top:675px;width:42px;height:17px;background:#ebebeb;"></div>
<div class="a" style="left:261px;top:675px;width:287px;height:17px;background:#f0f0f0;"></div>
<div class="a" style="left:278px;top:675px;width:227px;height:17px;background:#c8c8c8;"></div>
<div class="t" style="left:107px;top:679px;color:#333;">Datensatz 1 von 310</div>
<svg style="left:0;top:0" width="1024" height="768"><g fill="#8a8a8a"><rect x="56" y="680" width="1.5" height="7"/><path d="M61 680v7l-3.5-3.5z"/><path d="M65 680v7l-3.5-3.5z"/><path d="M75 680v7l-3.5-3.5z"/><path d="M79 680v7l-3.5-3.5z"/><path d="M92 680v7l-3.5-3.5z"/><path d="M225 680v7l3.5-3.5z"/><path d="M237 680v7l3.5-3.5z"/><path d="M241 680v7l3.5-3.5z"/><path d="M251 680v7l3.5-3.5z"/><path d="M255 680v7l3.5-3.5z"/><rect x="259" y="680" width="1.5" height="7"/></g><path d="M271.5 680l-4 3.5 4 3.5" fill="none" stroke="#666" stroke-width="1.6"/><path d="M538.5 680l4 3.5-4 3.5" fill="none" stroke="#666" stroke-width="1.6"/></svg>
<div class="a" style="left:568px;top:298px;width:407px;height:393px;background:#fff;border:1px solid #a6a6a6;"></div>
<div class="t" style="left:581px;top:309px;font-size:14px;line-height:14px;color:#1f6cb2;letter-spacing:-0.6px;">Details</div>
<svg style="left:954px;top:312px" width="8" height="9"><rect x="1.5" y="0.5" width="4.3" height="5" fill="none" stroke="#666" stroke-width="1"/><rect x="3.6" y="0" width="2.4" height="5.5" fill="#666"/><rect x="0" y="5" width="7" height="1" fill="#666"/><rect x="3" y="5.5" width="1" height="2.5" fill="#666"/></svg>
<div class="a" style="left:570px;top:357px;width:403px;height:332px;background:#fff;border:1px solid #a6a6a6;"></div>
<div class="a" style="left:570px;top:334px;width:69px;height:24px;background:#fff;border:1px solid #a6a6a6;border-bottom:none;"></div>
<div class="a" style="left:638px;top:336px;width:51px;height:22px;background:#fff;border:1px solid #a6a6a6;"></div>
<div class="a" style="left:689px;top:336px;width:66px;height:22px;background:#fff;border:1px solid #a6a6a6;"></div>
<div class="a" style="left:755px;top:336px;width:90px;height:22px;background:#fff;border:1px solid #a6a6a6;"></div>
<div class="t" style="left:581px;top:341px;color:#333;letter-spacing:-0.45px;">Allgemein</div>
<div class="t" style="left:648px;top:342px;color:#333;">Preise</div>
<div class="t" style="left:699px;top:342px;color:#333;">Optionen</div>
<div class="t" style="left:765px;top:342px;color:#333;">Informationen</div>
<div class="a" style="left:571px;top:358px;width:384px;height:330px;overflow:hidden">
<div class="a" style="left:12px;top:23px;width:360px;height:172px;border:1px solid #d0d0d0;"></div>
<div class="a" style="left:19px;top:18px;width:30px;height:10px;background:#fff;"></div>
<div class="t" style="left:23px;top:17px;color:#333">Info</div>
<div class="t" style="left:23px;top:48px;color:#333">PLU</div>
<div class="a" style="left:127px;top:43px;width:119px;height:20px;background:#fff;border:1px solid #a6a6a6;"></div>
<div class="t" style="left:23px;top:72px;color:#333">Artikel-Nr.</div>
<div class="a" style="left:127px;top:67px;width:119px;height:20px;background:#fff;border:1px solid #a6a6a6;"></div>
<div class="t" style="left:23px;top:96px;color:#333">Artikel-Name</div>
<div class="a" style="left:127px;top:91px;width:119px;height:20px;background:#fff;border:1px solid #a6a6a6;"></div>
<div class="t" style="left:130px;top:96px;color:#333">Hamburger</div>
<div class="t" style="left:23px;top:120px;color:#333">Information</div>
<div class="a" style="left:127px;top:115px;width:119px;height:20px;background:#fff;border:1px solid #a6a6a6;"></div>
<div class="t" style="left:23px;top:144px;color:#333">EAN</div>
<div class="a" style="left:127px;top:139px;width:119px;height:20px;background:#fff;border:1px solid #a6a6a6;"></div>
<div class="t" style="left:133px;top:144px;color:#333">-</div>
<div class="t" style="left:23px;top:168px;color:#333">Einheit</div>
<div class="a" style="left:127px;top:163px;width:119px;height:20px;background:#fff;border:1px solid #a6a6a6;"></div>
<div class="t" style="left:130px;top:168px;color:#333">STK</div>
<div class="a" style="left:229px;top:44px;width:16px;height:18px;background:#ededed;border-left:1px solid #d8d8d8;"></div>
<svg style="left:233px;top:46px" width="8" height="14"><path d="M1 4.5l3-3 3 3M1 9.5l3 3 3-3" fill="none" stroke="#777" stroke-width="1.4"/></svg>
<div class="t" style="left:129px;top:48px;width:96px;text-align:right;color:#333">200</div>
<div class="a" style="left:250px;top:43px;width:110px;height:140px;background:#fff;border:1px solid #a6a6a6;"></div>
<div class="t" style="left:250px;top:108px;width:110px;text-align:center;color:#333">Kein Bild vorhanden</div>
<div class="a" style="left:12px;top:210px;width:360px;height:200px;border:1px solid #d0d0d0;"></div>
<div class="a" style="left:19px;top:204px;width:72px;height:12px;background:#fff;"></div>
<div class="t" style="left:23px;top:204px;color:#333">Einstellungen</div>
<div class="t" style="left:23px;top:235px;color:#333">Haupt-Warengruppe</div>
<div class="a" style="left:127px;top:230px;width:233px;height:20px;background:#fff;border:1px solid #a6a6a6;"></div>
<div class="a" style="left:343px;top:231px;width:16px;height:18px;background:#ededed;border-left:1px solid #d8d8d8;"></div>
<svg style="left:347px;top:237px" width="9" height="6"><path d="M1 1l3.5 3.5L8 1" fill="none" stroke="#777" stroke-width="1.6"/></svg>
<div class="t" style="left:130px;top:235px;color:#333">Speisen</div>
<div class="t" style="left:23px;top:259px;color:#333">Unter-Warengruppe</div>
<div class="a" style="left:127px;top:254px;width:233px;height:20px;background:#fff;border:1px solid #a6a6a6;"></div>
<div class="a" style="left:343px;top:255px;width:16px;height:18px;background:#ededed;border-left:1px solid #d8d8d8;"></div>
<svg style="left:347px;top:261px" width="9" height="6"><path d="M1 1l3.5 3.5L8 1" fill="none" stroke="#777" stroke-width="1.6"/></svg>
<div class="t" style="left:130px;top:259px;color:#333">Fastfood</div>
<div class="t" style="left:23px;top:283px;color:#333">Lieferant</div>
<div class="a" style="left:127px;top:278px;width:233px;height:20px;background:#fff;border:1px solid #a6a6a6;"></div>
<div class="a" style="left:343px;top:279px;width:16px;height:18px;background:#ededed;border-left:1px solid #d8d8d8;"></div>
<svg style="left:347px;top:285px" width="9" height="6"><path d="M1 1l3.5 3.5L8 1" fill="none" stroke="#777" stroke-width="1.6"/></svg>
<div class="t" style="left:130px;top:283px;color:#333">-</div>
<div class="t" style="left:23px;top:307px;color:#333">Hauptlager</div>
<div class="a" style="left:127px;top:302px;width:233px;height:20px;background:#fff;border:1px solid #a6a6a6;"></div>
<div class="a" style="left:343px;top:303px;width:16px;height:18px;background:#ededed;border-left:1px solid #d8d8d8;"></div>
<svg style="left:347px;top:309px" width="9" height="6"><path d="M1 1l3.5 3.5L8 1" fill="none" stroke="#777" stroke-width="1.6"/></svg>
<div class="t" style="left:130px;top:307px;color:#333">-</div>
<div class="a" style="left:127px;top:326px;width:233px;height:20px;background:#fff;border:1px solid #a6a6a6;"></div>
<div class="a" style="left:343px;top:327px;width:16px;height:18px;background:#ededed;border-left:1px solid #d8d8d8;"></div>
<svg style="left:347px;top:333px" width="9" height="6"><path d="M1 1l3.5 3.5L8 1" fill="none" stroke="#777" stroke-width="1.6"/></svg>
</div>
<div class="a" style="left:955px;top:358px;width:17px;height:330px;background:#efefef;"></div>
<div class="a" style="left:955px;top:375px;width:17px;height:241px;background:#c8c8c8;"></div>
<svg style="left:959px;top:364px" width="9" height="6"><path d="M1 5l3.5-3.5L8 5" fill="none" stroke="#666" stroke-width="1.6"/></svg>
<svg style="left:959px;top:677px" width="9" height="6"><path d="M1 1l3.5 3.5L8 1" fill="none" stroke="#666" stroke-width="1.6"/></svg>
</body></html>
